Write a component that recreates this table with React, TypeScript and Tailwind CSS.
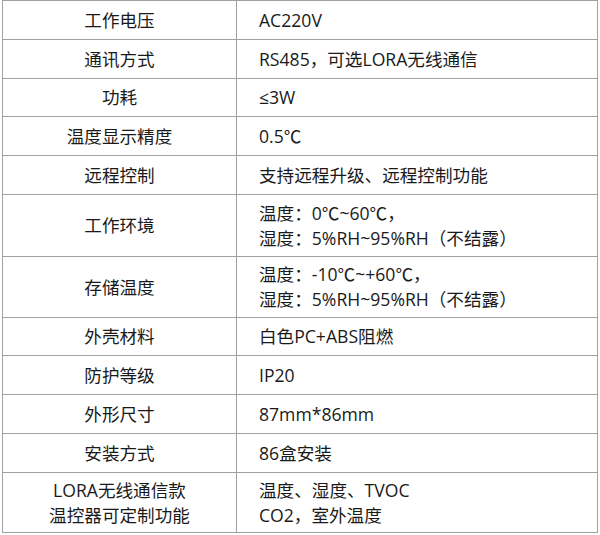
const rows: { label: string[]; value: string[]; h: string }[] = [
  { label: ['工作电压'], value: ['AC220V'], h: 'h-[39px]' },
  { label: ['通讯方式'], value: ['RS485，可选LORA无线通信'], h: 'h-[39px]' },
  { label: ['功耗'], value: ['≤3W'], h: 'h-[38px]' },
  { label: ['温度显示精度'], value: ['0.5℃'], h: 'h-[39px]' },
  { label: ['远程控制'], value: ['支持远程升级、远程控制功能'], h: 'h-[39px]' },
  { label: ['工作环境'], value: ['温度：0℃~60℃，', '湿度：5%RH~95%RH（不结露）'], h: 'h-[62px]' },
  { label: ['存储温度'], value: ['温度：-10℃~+60℃，', '湿度：5%RH~95%RH（不结露）'], h: 'h-[61px]' },
  { label: ['外壳材料'], value: ['白色PC+ABS阻燃'], h: 'h-[38px]' },
  { label: ['防护等级'], value: ['IP20'], h: 'h-[39px]' },
  { label: ['外形尺寸'], value: ['87mm*86mm'], h: 'h-[39px]' },
  { label: ['安装方式'], value: ['86盒安装'], h: 'h-[39px]' },
  { label: ['LORA无线通信款', '温控器可定制功能'], value: ['温度、湿度、TVOC', 'CO2，室外温度'], h: 'h-[60px]' },
]

export default function App() {
  return (
    <div className="w-[600px] h-[535px] bg-white pl-[2px] pt-0">
      <table
        className="border-collapse w-[596px] text-[17.6px] leading-[25px] text-[#1a1a1a]"
        style={{ fontFamily: '"Open Sans", "Noto Sans CJK SC", sans-serif' }}
      >
        <colgroup>
          <col className="w-[234px]" />
          <col />
        </colgroup>
        <tbody>
          {rows.map((r, i) => (
            <tr key={i} className={r.h}>
              <td className="border border-[#a0a0a0] text-center align-middle p-0">
                {r.label.map((l) => (
                  <div key={l}>{l}</div>
                ))}
              </td>
              <td className="border border-[#a0a0a0] align-middle pl-[22px] p-0">
                {r.value.map((v) => (
                  <div key={v}>{v}</div>
                ))}
              </td>
            </tr>
          ))}
        </tbody>
      </table>
    </div>
  )
}
